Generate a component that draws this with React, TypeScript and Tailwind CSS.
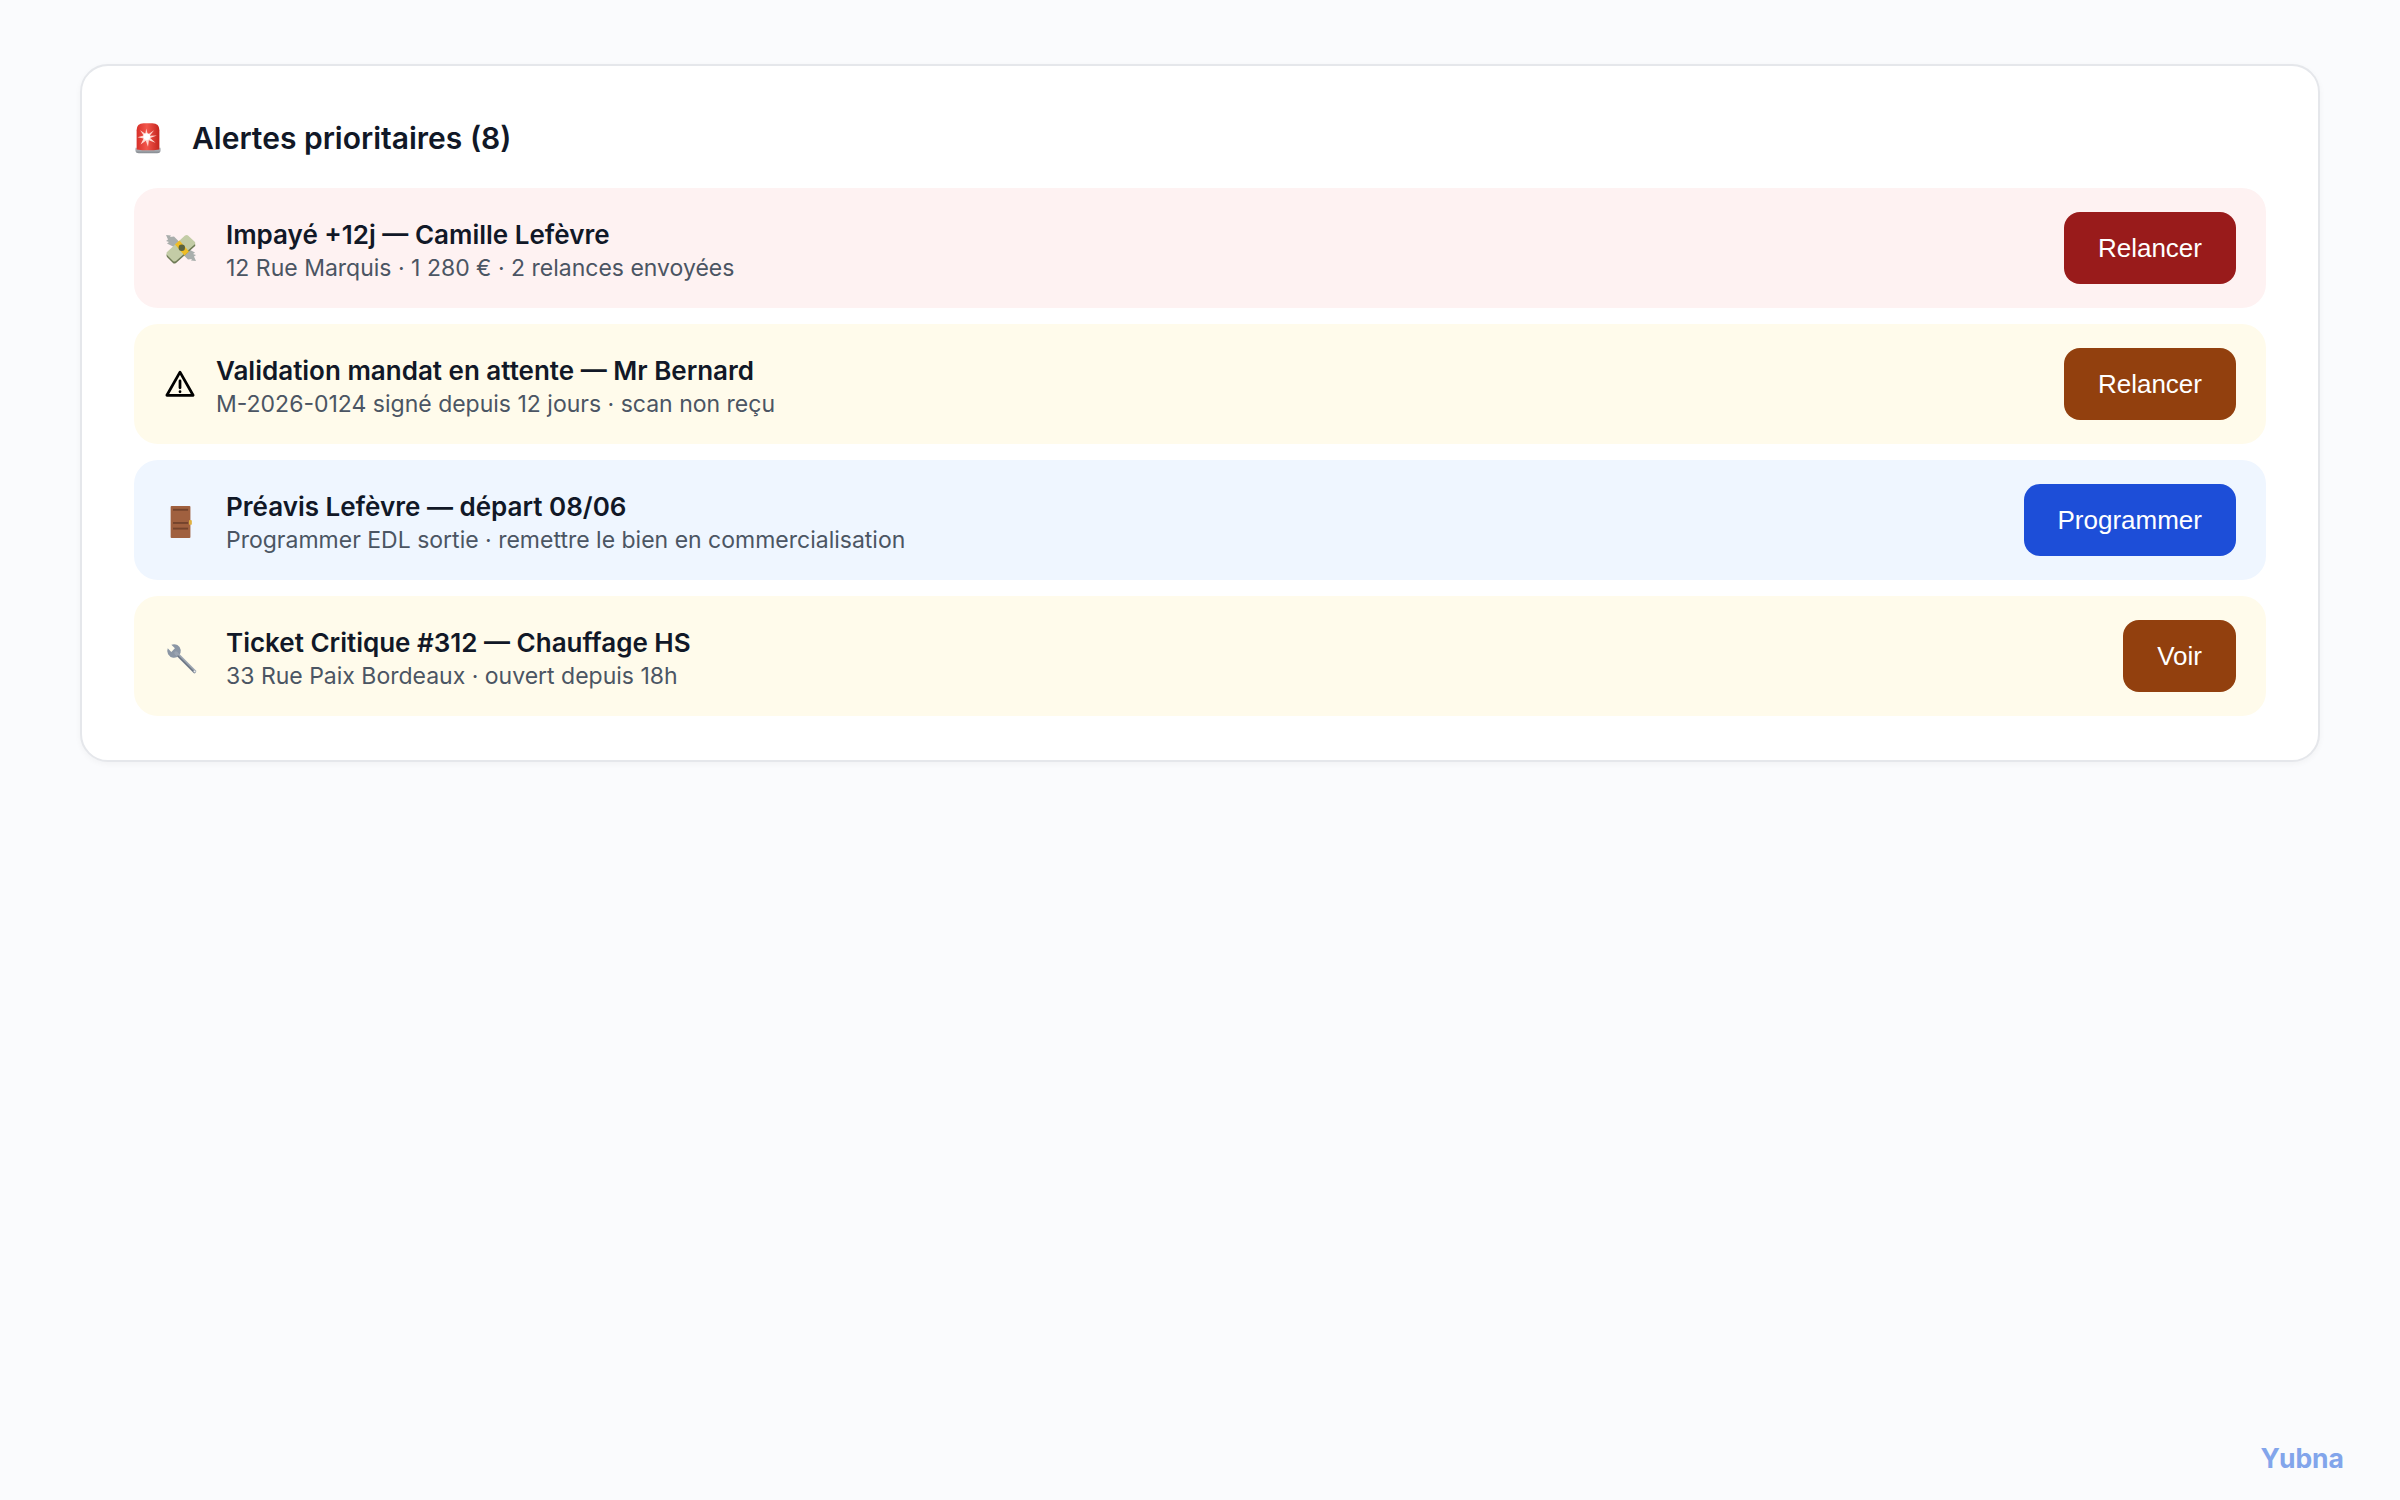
const RotatingLight = () => (
  <svg viewBox="0 0 32 36" className="w-[28px] h-[32px] shrink-0">
    <defs>
      <linearGradient id="sirenBody" x1="0" y1="0" x2="1" y2="0">
        <stop offset="0" stopColor="#d8302a" />
        <stop offset="0.45" stopColor="#f2574c" />
        <stop offset="1" stopColor="#c4241d" />
      </linearGradient>
      <linearGradient id="sirenBase" x1="0" y1="0" x2="0" y2="1">
        <stop offset="0" stopColor="#c7cbd0" />
        <stop offset="1" stopColor="#83888e" />
      </linearGradient>
    </defs>
    <path d="M1.500 29h29v2.500q0 4-4 4h-21q-4 0-4-4z" fill="url(#sirenBase)" />
    <path d="M3 9q0-8 8-8h10q8 0 8 8v22q-13 2-26 0z" fill="url(#sirenBody)" />
    <path d="M14 7l1.800 7 7.200-5-5 6.500 8-.5-7.500 3 6 5.500-7.500-3-1 7.500-2.500-7-6 4.500 3.500-7-7-1.500 7-2-4-6 6 4z" fill="#ffd9d2" />
    <circle cx="14.500" cy="16.500" r="3.800" fill="#ffffff" />
  </svg>
);

const MoneyWings = () => (
  <svg viewBox="0 0 34 34" className="w-[34px] h-[34px]">
    <path d="M2 4l5 .5-1 1.500 4-.5 6 6-5 5-8-4 2-1.500-3-1 2-1.500z" fill="#a9aeac" />
    <path d="M32 30l-5-.5 1-1.500-4 .5-6-6 5-5 8 4-2 1.500 3 1-2 1.500z" fill="#a9aeac" />
    <path d="M3 23L21 6.500q2-1 3 0l7 6.500q1 2-1 3L12 32q-2 1-3 0l-6-6q-1-2 0-3z" fill="#6e7a55" />
    <path d="M3 21L21 4.500q2-1 3 0l7 6.500q1 2-1 3L12 30q-2 1-3 0l-6-6q-1-2 0-3z" fill="#c3cca6" />
    <path d="M11 13.500l4.500-4 9.500 11-4.500 4z" fill="#efbd25" />
    <circle cx="17.800" cy="16.800" r="3.200" fill="#59633f" />
  </svg>
);

const WarningSign = () => (
  <svg viewBox="0 0 24 24" className="w-[30px] h-[30px] ml-[1px] shrink-0" fill="none" stroke="#000000" strokeWidth="2.200" strokeLinejoin="round" strokeLinecap="round">
    <path d="M12 2.500L22.500 21h-21z" />
    <path d="M12 9.500v5.500" />
    <path d="M12 18v.2" />
  </svg>
);

const Door = () => (
  <svg viewBox="0 0 24 34" className="w-[24px] h-[32px] mt-[3px]">
    <rect x="1" y="0" width="21" height="34" rx="1" fill="#a0603f" />
    <rect x="3.500" y="3" width="16" height="2" fill="#74432c" />
    <rect x="3.500" y="17" width="16" height="2" fill="#74432c" />
    <rect x="3.500" y="23" width="16" height="2" fill="#74432c" />
    <rect x="20.500" y="15" width="3" height="5" rx="1" fill="#e0b040" />
  </svg>
);

const Wrench = () => (
  <svg viewBox="0 0 34 34" className="w-[34px] h-[34px] mt-[3px]">
    <path d="M6.880 2.640L11.060 6.820L6.820 11.060L2.640 6.880A8 8 0 1 0 6.880 2.640Z" fill="#8b96a5" transform="translate(1.500 1.500) scale(.85)" />
    <path d="M12 12L30.500 30.500" stroke="#9aa3b0" strokeWidth="3.400" strokeLinecap="round" />
    <path d="M14 15L30.500 31.500" stroke="#6a7380" strokeWidth="1.200" strokeLinecap="round" />
    <circle cx="30.500" cy="30.500" r="1" fill="#eceef0" />
  </svg>
);

const alerts = [
  {
    icon: <MoneyWings />,
    iconBox: "w-[34px] justify-center",
    title: "Impayé +12j — Camille Lefèvre",
    sub: "12 Rue Marquis · 1 280 € · 2 relances envoyées",
    action: "Relancer",
    bg: "bg-[#fef2f2]",
    btn: "bg-[#991b1b]",
  },
  {
    icon: <WarningSign />,
    iconBox: "w-[24px]",
    title: "Validation mandat en attente — Mr Bernard",
    sub: "M-2026-0124 signé depuis 12 jours · scan non reçu",
    action: "Relancer",
    bg: "bg-[#fffbeb]",
    btn: "bg-[#92400e]",
  },
  {
    icon: <Door />,
    iconBox: "w-[34px] justify-center",
    title: "Préavis Lefèvre — départ 08/06",
    sub: "Programmer EDL sortie · remettre le bien en commercialisation",
    action: "Programmer",
    bg: "bg-[#eff6ff]",
    btn: "bg-[#1d4ed8]",
  },
  {
    icon: <Wrench />,
    iconBox: "w-[34px] justify-center",
    title: "Ticket Critique #312 — Chauffage HS",
    sub: "33 Rue Paix Bordeaux · ouvert depuis 18h",
    action: "Voir",
    bg: "bg-[#fffbeb]",
    btn: "bg-[#92400e]",
  },
];

export default function App() {
  return (
    <div className="relative min-h-screen bg-[#fafbfd] pt-16 px-20 font-['Inter',sans-serif]">
      {/* Card */}
      <div className="bg-white border-2 border-[#e5e7eb] rounded-[28px] px-[52px] pt-[42px] pb-[44px] shadow-[0_2px_6px_rgba(0,0,0,0.04)]">
        <div className="flex items-center gap-[30px] h-[60px] mb-[20px]">
          <RotatingLight />
          <h2 className="text-[30px] font-semibold text-[#111827]">Alertes prioritaires (8)</h2>
        </div>

        <div className="flex flex-col gap-4">
          {alerts.map((a) => (
            <div key={a.title} className={`flex items-center justify-between h-[120px] px-[30px] rounded-[24px] ${a.bg}`}>
              <div className="flex items-center gap-7">
                <div className={`flex ${a.iconBox}`}>{a.icon}</div>
                <div className="pt-[6px]">
                  <p className="text-[26px] leading-[34px] font-semibold text-[#111827]">{a.title}</p>
                  <p className="text-[23px] leading-[32px] text-[#4b5563]">{a.sub}</p>
                </div>
              </div>
              <button className={`h-[72px] px-[34px] pt-[1px] rounded-[16px] text-white text-[26px] font-['Liberation_Sans',sans-serif] ${a.btn}`}>
                {a.action}
              </button>
            </div>
          ))}
        </div>
      </div>

      {/* Watermark */}
      <span className="absolute right-[56px] bottom-[21px] text-[26.500px] font-bold text-[#82a5eb]">Yubna</span>
    </div>
  );
}
